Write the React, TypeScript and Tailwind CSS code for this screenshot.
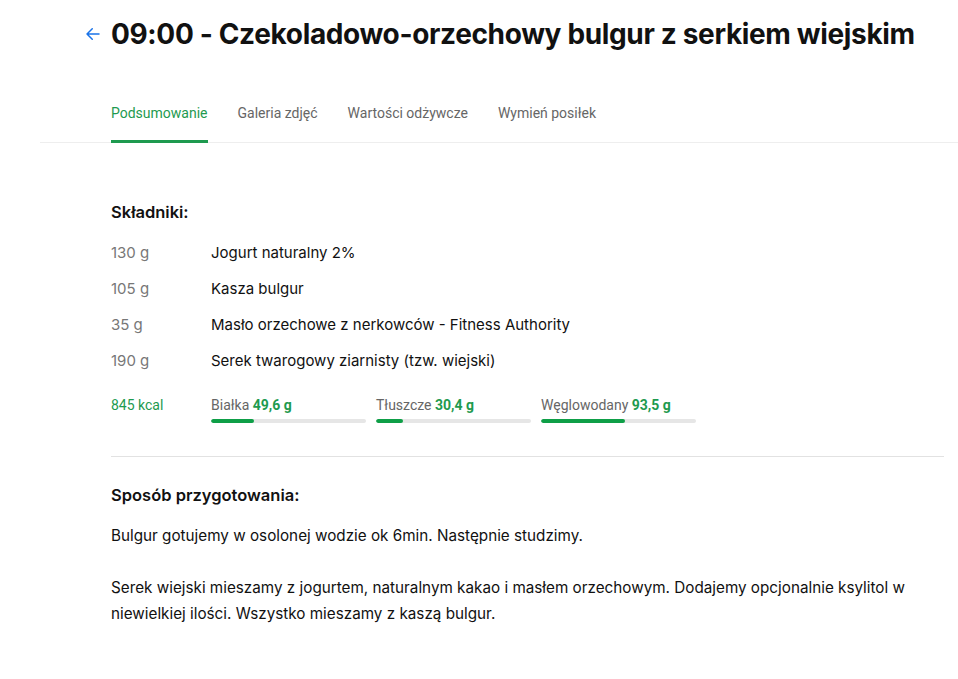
import React from "react";

const ingredients = [
  ["130 g", "Jogurt naturalny 2%"],
  ["105 g", "Kasza bulgur"],
  ["35 g", "Masło orzechowe z nerkowców - Fitness Authority"],
  ["190 g", "Serek twarogowy ziarnisty (tzw. wiejski)"],
];

const macros = [
  { label: "Białka", value: "49,6 g", pct: 28 },
  { label: "Tłuszcze", value: "30,4 g", pct: 17.5 },
  { label: "Węglowodany", value: "93,5 g", pct: 54.5 },
];

export default function App() {
  return (
    <div className="w-[958px] h-[679px] bg-white overflow-hidden text-[#111]" style={{ fontFamily: "Inter, sans-serif" }}>
      <div className="flex items-center pl-[84px] pt-[17px] h-[34px] box-content">
        <svg width="18" height="18" viewBox="0 0 24 24" fill="none" stroke="#1a73e8" strokeWidth="2" strokeLinecap="round" strokeLinejoin="round" className="mr-[9px]">
          <path d="M20 12H4M11 5l-7 7 7 7" />
        </svg>
        <h1 className="text-[28px] font-bold tracking-[-0.35px] leading-[34px] whitespace-nowrap" style={{ fontFamily: "Inter, sans-serif" }}>
          09:00 - Czekoladowo-orzechowy bulgur z serkiem wiejskim
        </h1>
      </div>

      <div className="mt-[54px] ml-[40px] border-b border-[#eeeeee]">
        <div className="flex gap-[30px] pl-[71px] text-[14px]" style={{ fontFamily: "Roboto, sans-serif" }}>
          <div className="text-[#1e9a4f] pb-[18px] border-b-[3px] border-[#1e9a4f] leading-[17px] -mb-px">Podsumowanie</div>
          <div className="text-[#666] leading-[17px]">Galeria zdjęć</div>
          <div className="text-[#666] leading-[17px]">Wartości odżywcze</div>
          <div className="text-[#666] leading-[17px]">Wymień posiłek</div>
        </div>
      </div>

      <div className="ml-[111px] mr-[14px]">
        <h2 className="mt-[59px] text-[16.5px] font-semibold leading-[20px]">Składniki:</h2>
        <div className="mt-[13px] flex flex-col">
          {ingredients.map(([a, n]) => (
            <div key={n} className="flex h-[36px] items-center text-[15px]">
              <span className="w-[100px] text-[#777]">{a}</span>
              <span>{n}</span>
            </div>
          ))}
        </div>
        <div className="flex mt-[17px] text-[14px]" style={{ fontFamily: "Roboto, sans-serif" }}>
          <div className="w-[100px] text-[#1e9a4f] leading-[18px]">845 kcal</div>
          <div className="flex gap-[10px]">
            {macros.map((m) => (
              <div key={m.label} className="w-[155px]">
                <div className="leading-[18px]">
                  <span className="text-[#666]">{m.label}</span>{" "}
                  <span className="text-[#1e9a4f] font-bold">{m.value}</span>
                </div>
                <div className="mt-[5px] h-[4px] rounded-full bg-[#e6e6e6] overflow-hidden">
                  <div className="h-full rounded-full bg-[#0e9f47]" style={{ width: `${m.pct}%` }} />
                </div>
              </div>
            ))}
          </div>
        </div>
        <div className="mt-[33px] border-t border-[#e2e2e2]" />
        <h2 className="mt-[28px] text-[16.5px] font-semibold leading-[20px]">Sposób przygotowania:</h2>
        <div className="mt-[18px] text-[15.25px] leading-[26px] w-[810px]">
          <p>Bulgur gotujemy w osolonej wodzie ok 6min. Następnie studzimy.</p>
          <p className="mt-[26px]">
            Serek wiejski mieszamy z jogurtem, naturalnym kakao i masłem orzechowym. Dodajemy opcjonalnie ksylitol w niewielkiej ilości. Wszystko mieszamy z kaszą bulgur.
          </p>
        </div>
      </div>
    </div>
  );
}
